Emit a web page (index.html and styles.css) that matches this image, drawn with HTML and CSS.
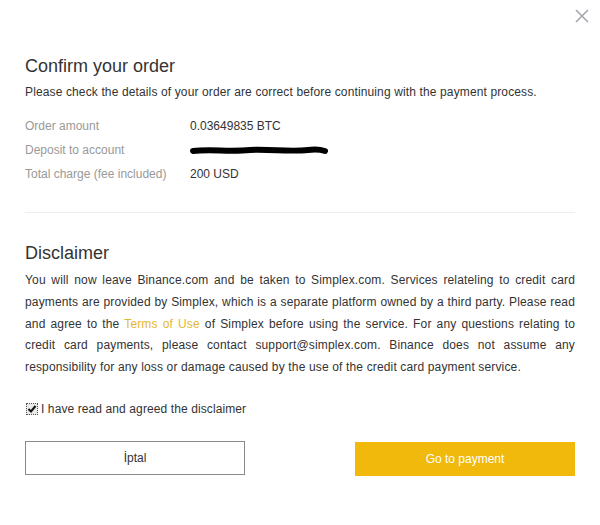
FILE: index.html
```html
<!DOCTYPE html>
<html>
<head>
<meta charset="utf-8">
<link rel="stylesheet" href="styles.css">
</head>
<body>
<div class="modal">
  <button class="close" aria-label="Close">
    <svg width="14" height="14" viewBox="0 0 14 14"><path d="M1 1L13 13M13 1L1 13" stroke="#a3a6ad" stroke-width="1.6" fill="none"/></svg>
  </button>
  <h2 class="title">Confirm your order</h2>
  <p class="sub">Please check the details of your order are correct before continuing with the payment process.</p>
  <div class="rows">
    <div class="row"><span class="label">Order amount</span><span class="value">0.03649835 BTC</span></div>
    <div class="row"><span class="label">Deposit to account</span><span class="value"><svg class="redact" width="138" height="9" viewBox="0 0 138 9"><path d="M3 5C20 3 40 6 60 4C80 3 100 6 118 4C126 3 132 4 135 5" stroke="#000" stroke-width="6" stroke-linecap="round" fill="none"/></svg></span></div>
    <div class="row"><span class="label">Total charge (fee included)</span><span class="value">200 USD</span></div>
  </div>
  <hr class="divider">
  <h2 class="title title2">Disclaimer</h2>
  <p class="para">You will now leave Binance.com and be taken to Simplex.com. Services relateling to credit card payments are provided by Simplex, which is a separate platform owned by a third party. Please read and agree to the <a class="link" href="#">Terms of Use</a> of Simplex before using the service. For any questions relating to credit card payments, please contact support@simplex.com. Binance does not assume any responsibility for any loss or damage caused by the use of the credit card payment service.</p>
  <label class="agree">
    <span class="cbox"><svg width="10" height="10" viewBox="0 0 10 10"><path d="M1.5 5L4 7.5L8.5 2" stroke="#111" stroke-width="2" fill="none"/></svg></span>
    <span>I have read and agreed the disclaimer</span>
  </label>
  <div class="actions">
    <button class="btn btn-cancel">İptal</button>
    <button class="btn btn-go">Go to payment</button>
  </div>
</div>
</body>
</html>
```
FILE: styles.css
```css
html, body {
  margin: 0;
  padding: 0;
  background: #fff;
}
body {
  font-family: "Liberation Sans", Arial, sans-serif;
  color: #333;
  font-size: 12px;
}
.modal {
  position: relative;
  width: 600px;
  height: 525px;
  box-sizing: border-box;
  padding: 0 25px;
  overflow: hidden;
}
.close {
  position: absolute;
  top: 9px;
  right: 11px;
  width: 14px;
  height: 14px;
  padding: 0;
  border: 0;
  background: none;
  line-height: 0;
}
.title {
  margin: 54px 0 0;
  font-size: 18px;
  font-weight: normal;
  line-height: 24px;
  color: #333;
}
.title2 {
  margin-top: 28px;
}
.sub {
  margin: 4px 0 0;
  line-height: 20px;
  color: #333;
  letter-spacing: 0.13px;
}
.rows {
  margin-top: 12px;
}
.row {
  display: flex;
  line-height: 24px;
}
.label {
  width: 165px;
  color: #999;
}
.value {
  color: #333;
  display: flex;
  align-items: center;
}
.redact {
  display: block;
  margin-top: 1px;
}
.divider {
  margin: 26px 0 0;
  border: 0;
  height: 1px;
  background: #eeeeee;
}
.para {
  margin: 5px 0 0;
  line-height: 21.75px;
  text-align: justify;
  color: #333;
  letter-spacing: 0.15px;
}
.link {
  color: #e5b72e;
  text-decoration: none;
}
.agree {
  display: flex;
  align-items: center;
  margin-top: 20px;
  line-height: 20px;
  color: #333;
  letter-spacing: 0.1px;
}
.cbox {
  width: 10px;
  height: 10px;
  border: 1px dotted #555;
  background: #e9e9e9;
  margin: 0 3px 0 1px;
  display: flex;
  align-items: center;
  justify-content: center;
}
.actions {
  display: flex;
  justify-content: space-between;
  margin-top: 22px;
}
.btn {
  width: 220px;
  height: 34px;
  font-family: "Liberation Sans", Arial, sans-serif;
  font-size: 12px;
  box-sizing: border-box;
  padding: 0;
  cursor: pointer;
}
.btn-cancel {
  background: #fff;
  border: 1px solid #8a8a8a;
  color: #333;
}
.btn-go {
  background: #f0b90b;
  border: 0;
  color: #fff;
  margin-top: 1px;
}
```
